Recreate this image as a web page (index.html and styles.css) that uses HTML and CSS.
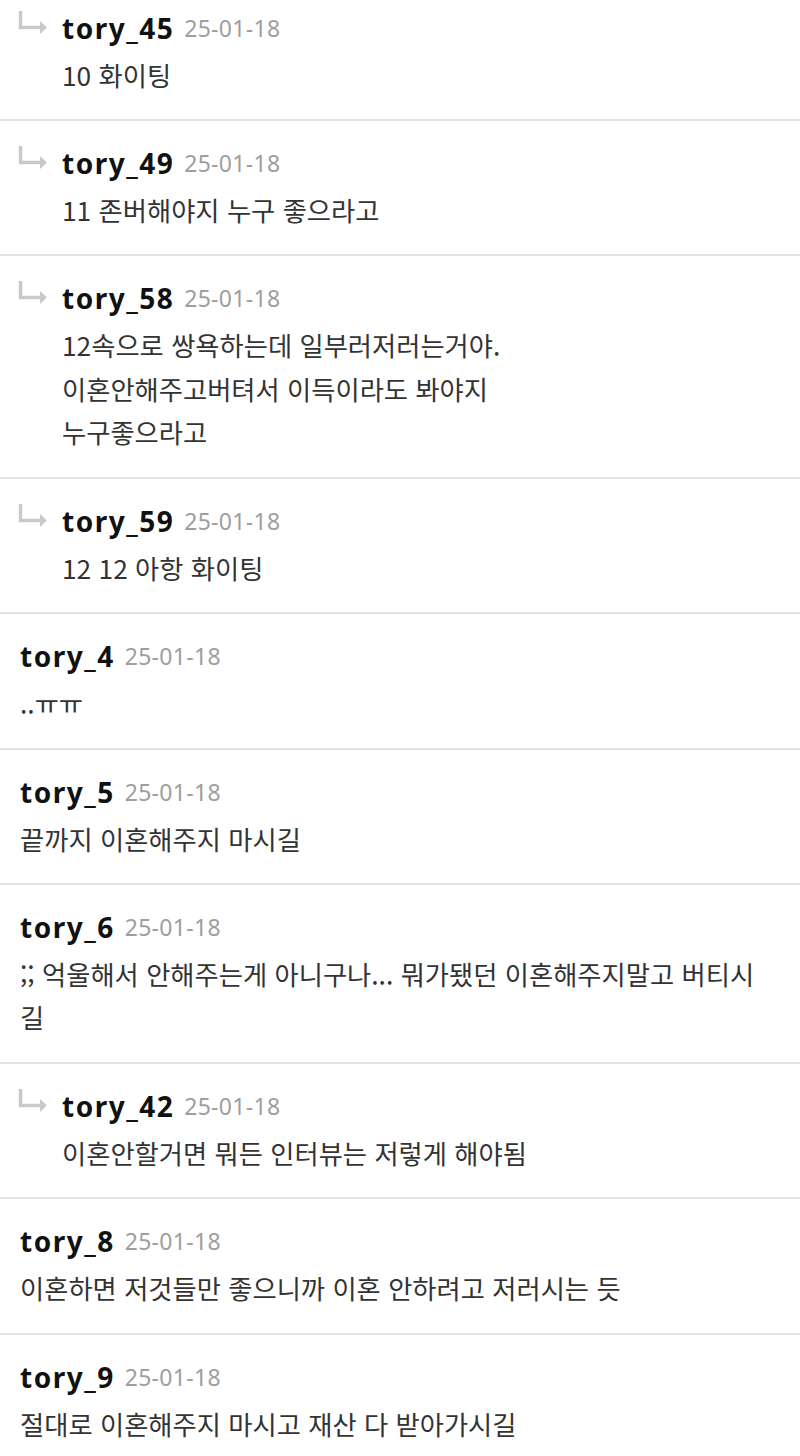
FILE: index.html
```html
<!DOCTYPE html>
<html lang="ko">
<head>
<meta charset="utf-8">
<link rel="stylesheet" href="styles.css">
</head>
<body>
<div class="list">
  <div class="row reply">
    <svg class="arrow" viewBox="0 0 30 26"><path d="M2.5 1 V17.5 H23" /><polygon points="22,11 29,17.5 22,24" /></svg>
    <div class="body">
      <div class="head"><span class="name">tory_45</span><span class="date">25-01-18</span></div>
      <div class="text">10 화이팅</div>
    </div>
  </div>
  <div class="row reply">
    <svg class="arrow" viewBox="0 0 30 26"><path d="M2.5 1 V17.5 H23" /><polygon points="22,11 29,17.5 22,24" /></svg>
    <div class="body">
      <div class="head"><span class="name">tory_49</span><span class="date">25-01-18</span></div>
      <div class="text">11 존버해야지 누구 좋으라고</div>
    </div>
  </div>
  <div class="row reply">
    <svg class="arrow" viewBox="0 0 30 26"><path d="M2.5 1 V17.5 H23" /><polygon points="22,11 29,17.5 22,24" /></svg>
    <div class="body">
      <div class="head"><span class="name">tory_58</span><span class="date">25-01-18</span></div>
      <div class="text">12속으로 쌍욕하는데 일부러저러는거야.<br>이혼안해주고버텨서 이득이라도 봐야지<br>누구좋으라고</div>
    </div>
  </div>
  <div class="row reply">
    <svg class="arrow" viewBox="0 0 30 26"><path d="M2.5 1 V17.5 H23" /><polygon points="22,11 29,17.5 22,24" /></svg>
    <div class="body">
      <div class="head"><span class="name">tory_59</span><span class="date">25-01-18</span></div>
      <div class="text">12 12 아항 화이팅</div>
    </div>
  </div>
  <div class="row">
    <div class="body">
      <div class="head"><span class="name">tory_4</span><span class="date">25-01-18</span></div>
      <div class="text">..ㅠㅠ</div>
    </div>
  </div>
  <div class="row">
    <div class="body">
      <div class="head"><span class="name">tory_5</span><span class="date">25-01-18</span></div>
      <div class="text">끝까지 이혼해주지 마시길</div>
    </div>
  </div>
  <div class="row">
    <div class="body">
      <div class="head"><span class="name">tory_6</span><span class="date">25-01-18</span></div>
      <div class="text">;; 억울해서 안해주는게 아니구나... 뭐가됐던 이혼해주지말고 버티시길</div>
    </div>
  </div>
  <div class="row reply">
    <svg class="arrow" viewBox="0 0 30 26"><path d="M2.5 1 V17.5 H23" /><polygon points="22,11 29,17.5 22,24" /></svg>
    <div class="body">
      <div class="head"><span class="name">tory_42</span><span class="date">25-01-18</span></div>
      <div class="text">이혼안할거면 뭐든 인터뷰는 저렇게 해야됨</div>
    </div>
  </div>
  <div class="row">
    <div class="body">
      <div class="head"><span class="name">tory_8</span><span class="date">25-01-18</span></div>
      <div class="text">이혼하면 저것들만 좋으니까 이혼 안하려고 저러시는 듯</div>
    </div>
  </div>
  <div class="row">
    <div class="body">
      <div class="head"><span class="name">tory_9</span><span class="date">25-01-18</span></div>
      <div class="text">절대로 이혼해주지 마시고 재산 다 받아가시길</div>
    </div>
  </div>
</div>
</body>
</html>
```

FILE: styles.css
```css
html, body {
  margin: 0;
  padding: 0;
  background: #ffffff;
}
body {
  width: 800px;
  height: 1456px;
  overflow: hidden;
  font-family: "Noto Sans", "Noto Sans CJK KR", sans-serif;
}
.list {
  margin-top: -14.5px;
}
.row {
  display: flex;
  align-items: flex-start;
  padding: 19px 36px 23.2px 20px;
  border-bottom: 2px solid #e2e2e2;
}
.row.reply {
  padding-left: 18px;
}
.arrow {
  flex: none;
  width: 30px;
  height: 26px;
  margin-top: 5px;
  margin-right: 14px;
}
.arrow path {
  fill: none;
  stroke: #c9c9c9;
  stroke-width: 3.5;
}
.arrow polygon {
  fill: #c9c9c9;
}
.body {
  flex: 1;
  min-width: 0;
}
.head {
  height: 46px;
  display: flex;
  align-items: center;
  white-space: nowrap;
}
.name {
  font-size: 28px;
  font-weight: 700;
  color: #111111;
  letter-spacing: 1.5px;
}
.date {
  font-size: 23px;
  color: #9e9e9e;
  margin-left: 10px;
  letter-spacing: 0.3px;
}
.text {
  margin-top: 2px;
  font-family: "Noto Sans CJK KR", sans-serif;
  font-size: 26.3px;
  line-height: 43.3px;
  color: #333333;
}
```
